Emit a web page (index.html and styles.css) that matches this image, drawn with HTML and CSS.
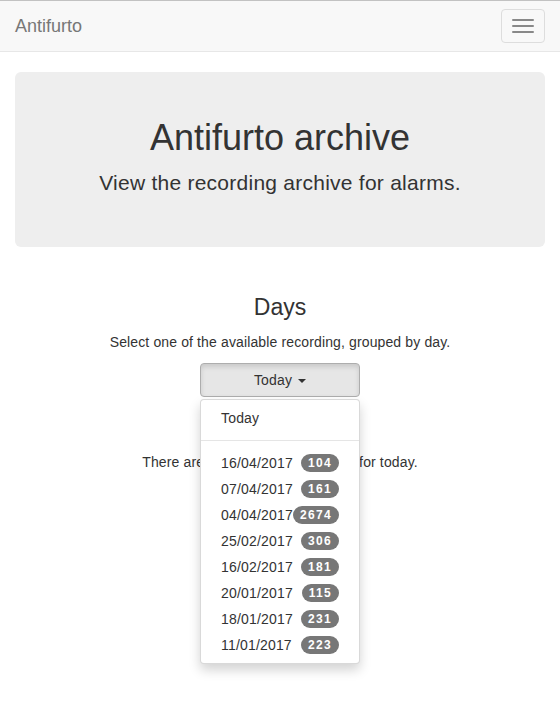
FILE: index.html
```html
<!DOCTYPE html>
<html>
<head>
<meta charset="utf-8">
<title>Antifurto archive</title>
<link rel="stylesheet" href="styles.css">
</head>
<body>
<nav class="navbar">
  <a class="brand">Antifurto</a>
  <button class="toggle" type="button"><span class="bar"></span><span class="bar"></span><span class="bar"></span></button>
</nav>
<div class="container">
  <div class="jumbotron">
    <h1>Antifurto archive</h1>
    <p>View the recording archive for alarms.</p>
  </div>
  <h3 class="days-title">Days</h3>
  <p class="lead-text">Select one of the available recording, grouped by day.</p>
  <div class="dropdown">
    <button class="btn" type="button">Today <span class="caret"></span></button>
    <ul class="menu">
      <li><a>Today</a></li>
      <li class="divider"></li>
      <li><a>16/04/2017<span class="badge">104</span></a></li>
      <li><a>07/04/2017<span class="badge">161</span></a></li>
      <li><a>04/04/2017<span class="badge">2674</span></a></li>
      <li><a>25/02/2017<span class="badge">306</span></a></li>
      <li><a>16/02/2017<span class="badge">181</span></a></li>
      <li><a>20/01/2017<span class="badge">115</span></a></li>
      <li><a>18/01/2017<span class="badge">231</span></a></li>
      <li><a>11/01/2017<span class="badge">223</span></a></li>
    </ul>
  </div>
  <p class="empty">There are no recordings available for today.</p>
</div>
</body>
</html>
```
FILE: styles.css
```css
* { box-sizing: border-box; }
html, body { margin: 0; padding: 0; }
body {
  min-height: 706px;
  font-family: "Liberation Sans", Arial, sans-serif;
  font-size: 14px;
  line-height: 1.42857;
  color: #333;
  background: #fff;
}
.navbar {
  display: flex;
  align-items: flex-start;
  justify-content: space-between;
  height: 52px;
  background: #f8f8f8;
  border-top: 1px solid #c2c2c2;
  border-bottom: 1px solid #e7e7e7;
  margin-bottom: 20px;
  padding: 0 15px;
}
.brand {
  font-size: 18px;
  line-height: 20px;
  color: #777;
  padding: 15px 0 0 0;
}
.toggle {
  margin-top: 8px;
  width: 44px;
  height: 34px;
  padding: 9px 10px;
  background: transparent;
  border: 1px solid #ddd;
  border-radius: 4px;
  display: flex;
  flex-direction: column;
  gap: 4px;
}
.bar {
  display: block;
  width: 22px;
  height: 2px;
  border-radius: 1px;
  background: #888;
}
.container {
  padding: 0 15px;
  text-align: center;
}
.jumbotron {
  background: #eee;
  border-radius: 6px;
  padding: 30px 15px;
  margin-bottom: 30px;
}
.jumbotron h1 {
  font-size: 36px;
  font-weight: 500;
  line-height: 1.1;
  margin: 16px 0 10px;
}
.jumbotron p {
  font-size: 21px;
  font-weight: 200;
  line-height: 30px;
  letter-spacing: 0.25px;
  margin: 0 0 19px;
}
.days-title {
  font-size: 23px;
  font-weight: 500;
  line-height: 1.1;
  margin: 48px 0 13px;
}
.lead-text {
  letter-spacing: 0.13px;
  margin: 0 0 10px;
}
.dropdown {
  position: relative;
  display: flex;
  justify-content: center;
}
.btn {
  width: 160px;
  height: 34px;
  font-family: inherit;
  font-size: 14px;
  letter-spacing: 0.15px;
  color: #333;
  background: #e6e6e6;
  border: 1px solid #adadad;
  border-radius: 4px;
  box-shadow: inset 0 3px 5px rgba(0,0,0,.125);
  padding: 6px 12px;
}
.caret {
  display: inline-block;
  width: 0;
  height: 0;
  margin-left: 2px;
  vertical-align: middle;
  border-top: 4px solid #333;
  border-left: 4px solid transparent;
  border-right: 4px solid transparent;
}
.menu {
  position: absolute;
  top: 100%;
  left: 50%;
  margin: 2px 0 0 -80px;
  width: 160px;
  list-style: none;
  padding: 5px 0;
  background: #fff;
  border: 1px solid rgba(0,0,0,.15);
  border-radius: 4px;
  box-shadow: 0 6px 12px rgba(0,0,0,.175);
  text-align: left;
  z-index: 10;
}
.menu a {
  display: flex;
  justify-content: space-between;
  align-items: center;
  padding: 3px 20px;
  line-height: 20px;
  letter-spacing: 0.18px;
  color: #333;
  white-space: nowrap;
}
.divider {
  height: 1px;
  margin: 9px 0;
  background: #e5e5e5;
}
.badge {
  display: inline-block;
  min-width: 10px;
  padding: 3px 7px;
  font-size: 12px;
  font-weight: bold;
  line-height: 1;
  letter-spacing: 1.3px;
  color: #fff;
  background: #777;
  border-radius: 10px;
  text-align: center;
}
.empty {
  letter-spacing: 0.13px;
  margin: 56px 0 10px;
}
```
